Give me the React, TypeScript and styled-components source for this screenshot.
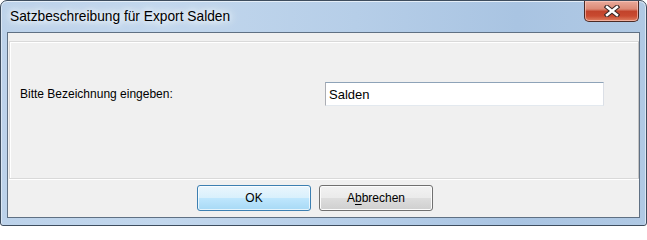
import React from "react";
import styled, { createGlobalStyle } from "styled-components";

const GlobalStyle = createGlobalStyle`
  html, body {
    margin: 0;
    padding: 0;
    background: #ffffff;
  }
  body {
    font-family: "Liberation Sans", Arial, sans-serif;
  }
`;

const CloseGlyph = () => (
  <svg width="16" height="12" viewBox="0 0 16 12">
    <path
      d="M3 2 L13 10 M13 2 L3 10"
      stroke="#3b2a28"
      strokeWidth="4.6"
      strokeLinecap="square"
      fill="none"
    />
    <path
      d="M3 2 L13 10 M13 2 L3 10"
      stroke="#ffffff"
      strokeWidth="2.4"
      strokeLinecap="square"
      fill="none"
    />
  </svg>
);

export default function App() {
  return (
    <>
      <GlobalStyle />
      <Window>
        <TitleBar>
          <Title>Satzbeschreibung für Export Salden</Title>
          <CloseButton aria-label="Schließen">
            <CloseGlyph />
          </CloseButton>
        </TitleBar>
        <Client>
          <Panel>
            <FieldRow>
              <Label>Bitte Bezeichnung eingeben:</Label>
              <TextInput defaultValue="Salden" />
            </FieldRow>
          </Panel>
          <Footer>
            <DialogButton $default>OK</DialogButton>
            <DialogButton>
              A<u>b</u>brechen
            </DialogButton>
          </Footer>
        </Client>
      </Window>
    </>
  );
}

const Window = styled.div`
  box-sizing: border-box;
  width: 647px;
  height: 226px;
  border: 1px solid #3e4d5e;
  border-radius: 7px 7px 3px 3px;
  background: linear-gradient(
    90deg,
    #bcd2ea 0%,
    #c2d7ed 25%,
    #b6cee8 55%,
    #a9c4e2 80%,
    #b0c9e4 100%
  );
  box-shadow: inset 0 1px 0 #e4eef8, inset 1px 0 0 #dbe7f4,
    inset -1px 0 0 #dbe7f4;
  display: flex;
  flex-direction: column;
  overflow: hidden;
`;

const TitleBar = styled.div`
  height: 31px;
  flex: none;
  display: flex;
  align-items: flex-start;
  justify-content: space-between;
  padding-left: 9px;
  padding-right: 7px;
`;

const Title = styled.span`
  margin-top: 8px;
  font-family: "Liberation Sans", Arial, sans-serif;
  font-size: 13.75px;
  color: #000000;
  text-shadow: 0 0 6px #ffffff, 0 0 10px #ffffff, 0 0 14px #e8f1fa;
`;

const CloseButton = styled.div`
  box-sizing: border-box;
  width: 55px;
  height: 21px;
  border: 1px solid #4b2a25;
  border-top: none;
  border-radius: 0 0 5px 5px;
  background: linear-gradient(
    180deg,
    #e9aa9b 0%,
    #dc8a76 40%,
    #c2432b 52%,
    #c94a30 75%,
    #de8163 100%
  );
  box-shadow: inset 0 0 0 1px rgba(255, 210, 200, 0.6);
  display: flex;
  align-items: center;
  justify-content: center;
`;

const Client = styled.div`
  flex: 1;
  margin: 0 6px 7px 6px;
  border: 1px solid #5f7083;
  background: #f0f0f0;
  display: flex;
  flex-direction: column;
`;

const Panel = styled.div`
  box-sizing: border-box;
  height: 138px;
  margin: 8px 0 0 1px;
  border: 1px solid #d9d9d9;
  border-right-color: #c4c4c4;
  box-shadow: inset 1px 1px 0 #ffffff, 0 1px 0 #ffffff;
  padding: 40px 0 0 10px;
`;

const FieldRow = styled.div`
  display: grid;
  grid-template-columns: 305px 279px;
  align-items: center;
  height: 24px;
`;

const Label = styled.span`
  font-family: "Liberation Sans", Arial, sans-serif;
  font-size: 12px;
  color: #000000;
`;

const TextInput = styled.input`
  box-sizing: border-box;
  width: 279px;
  height: 24px;
  margin: 0;
  padding: 0 3px;
  border: 1px solid #abadb3;
  border-top-color: #8ea3b8;
  border-right-color: #dbdfe6;
  border-bottom-color: #e3e9ef;
  background: #ffffff;
  font-family: "Liberation Sans", Arial, sans-serif;
  font-size: 13px;
  color: #000000;
  outline: none;
`;

const Footer = styled.div`
  flex: 1;
  display: flex;
  gap: 8px;
  padding: 6px 0 0 189px;
`;

const DialogButton = styled.div<{ $default?: boolean }>`
  box-sizing: border-box;
  width: 114px;
  height: 26px;
  border: 1px solid ${(p) => (p.$default ? "#3c7fb1" : "#707070")};
  border-radius: 3px;
  background: ${(p) =>
    p.$default
      ? "linear-gradient(180deg, #eaf6fd 0%, #d9f0fc 48%, #bee6fd 52%, #a7d9f5 100%)"
      : "linear-gradient(180deg, #f2f2f2 0%, #ebebeb 48%, #dddddd 52%, #cfcfcf 100%)"};
  box-shadow: inset 0 0 0 1px
    ${(p) => (p.$default ? "rgba(255,255,255,0.7)" : "#fcfcfc")};
  display: flex;
  align-items: center;
  justify-content: center;
  font-family: "Liberation Sans", Arial, sans-serif;
  font-size: 12px;
  color: #000000;

  u {
    text-decoration: underline;
    text-underline-offset: 2px;
  }
`;
